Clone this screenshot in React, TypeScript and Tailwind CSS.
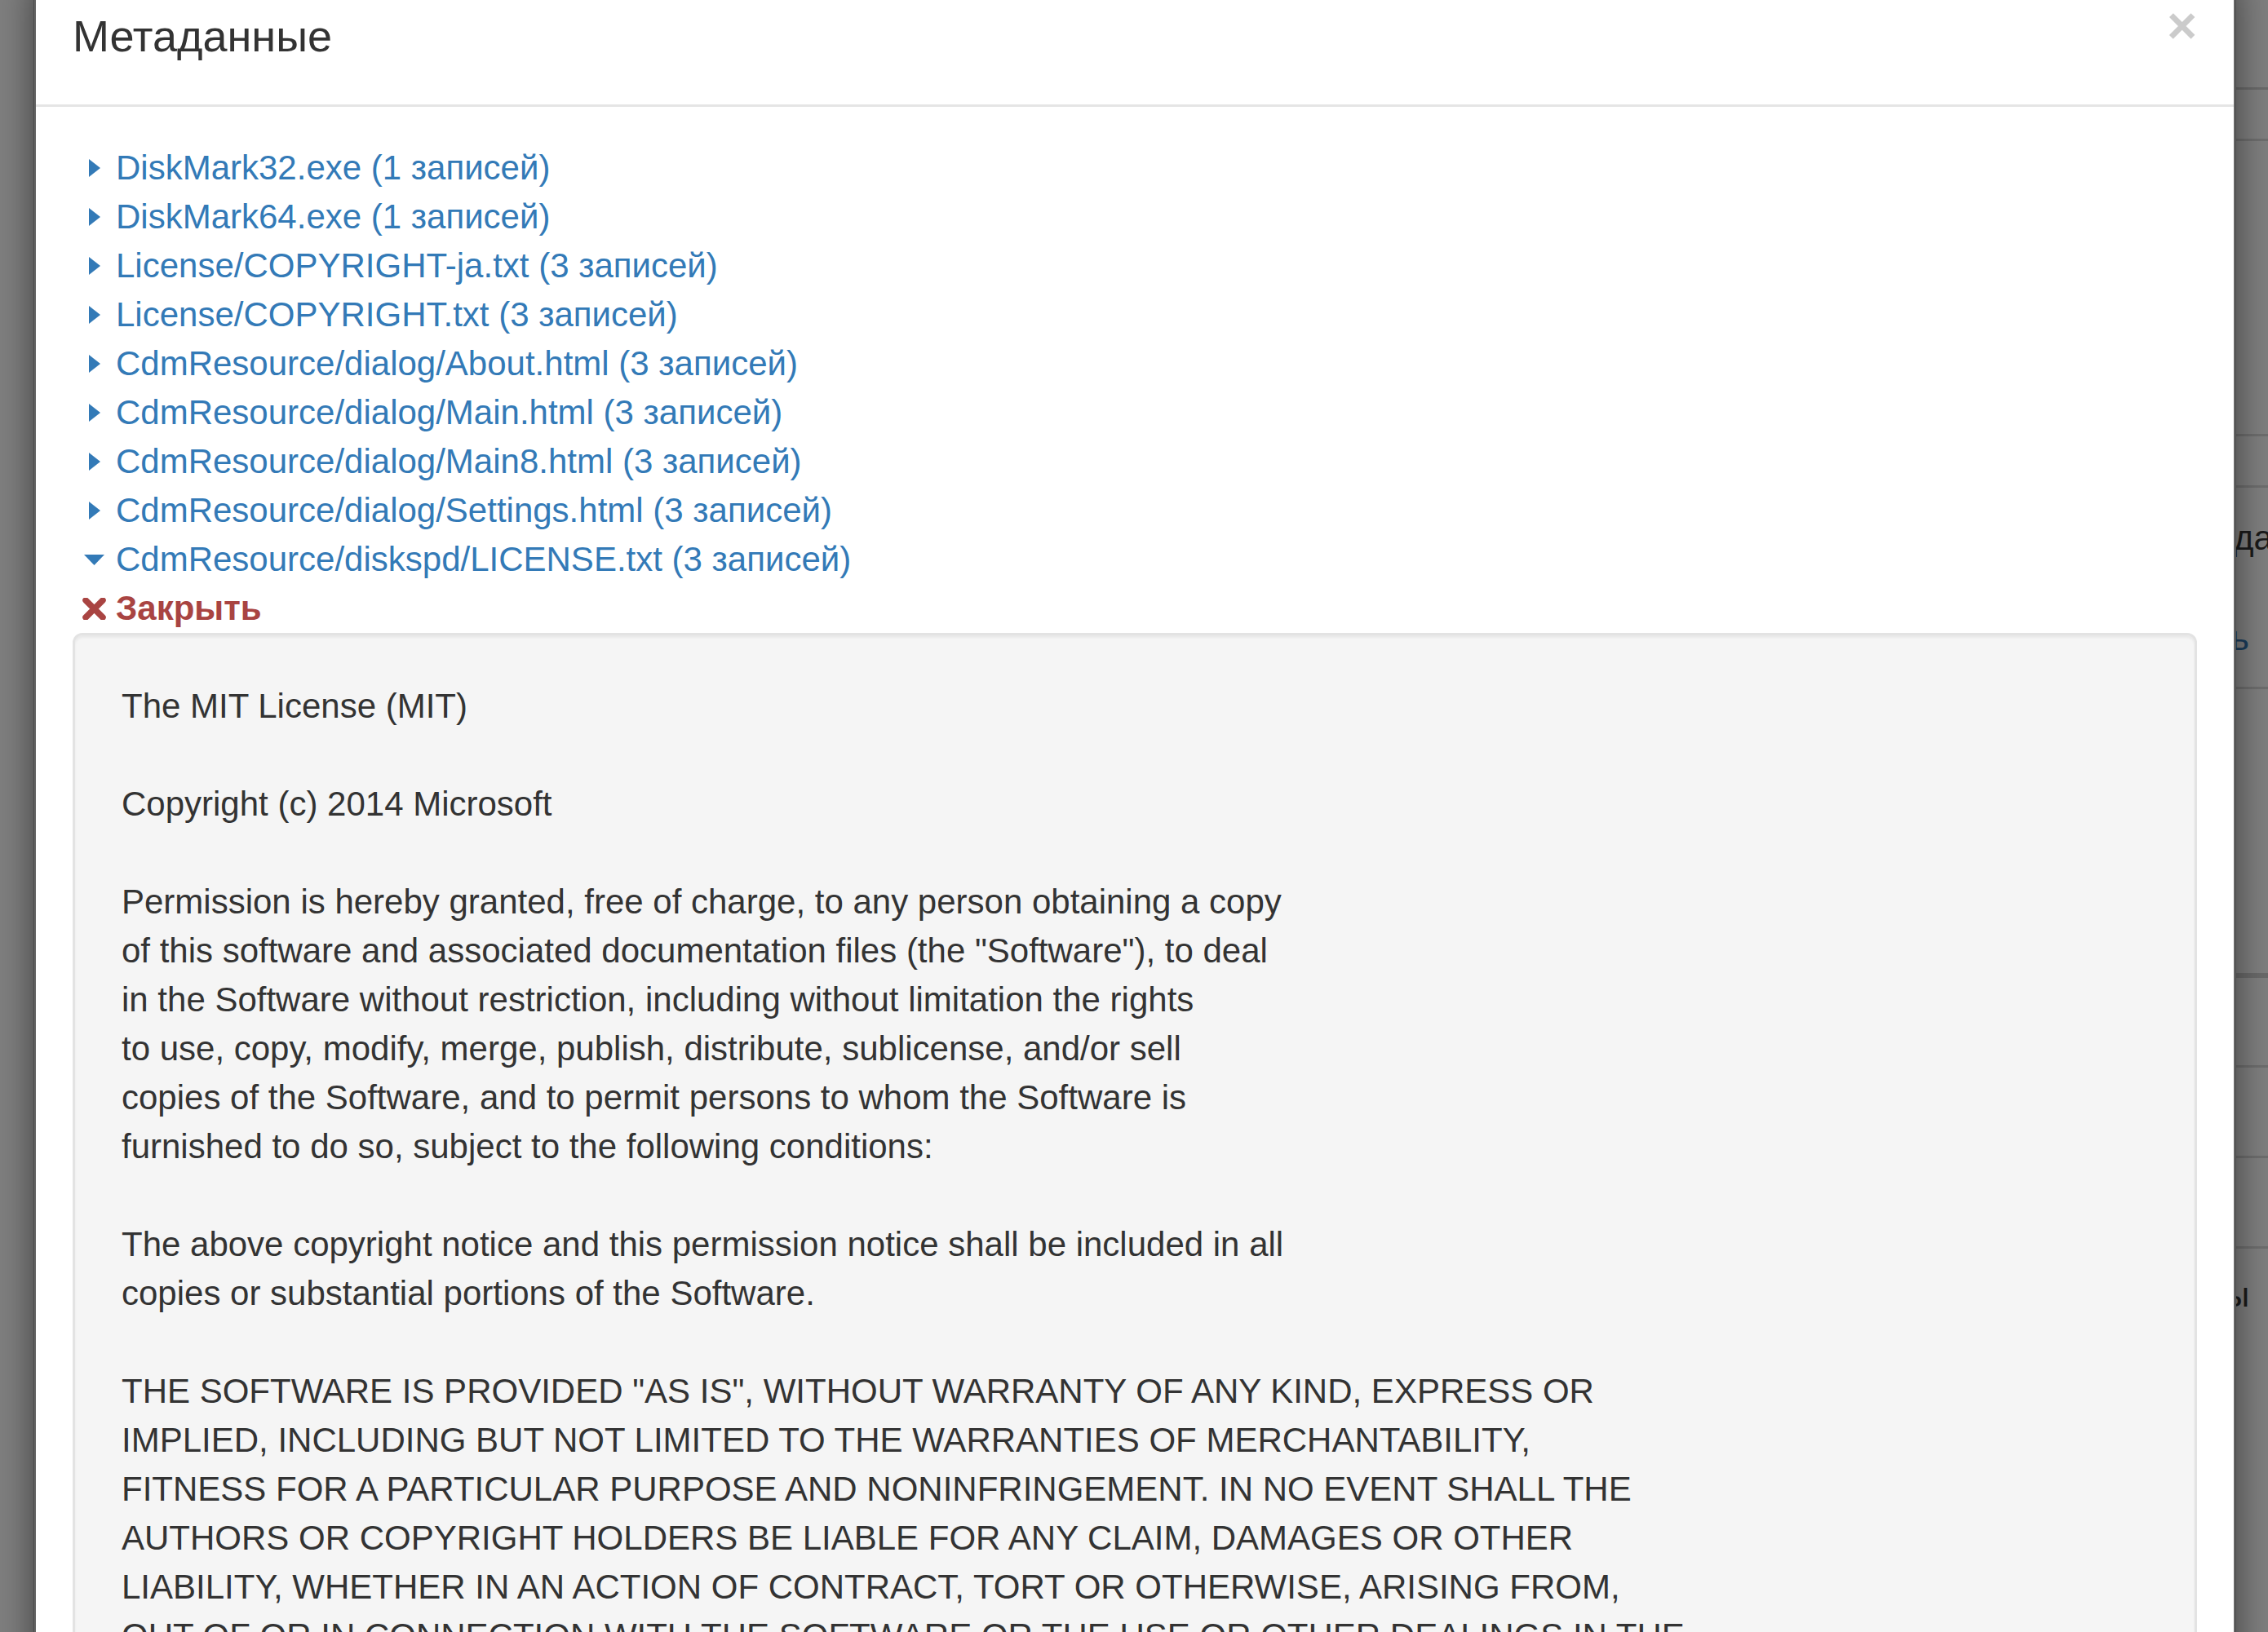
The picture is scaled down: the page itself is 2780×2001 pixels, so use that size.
import React from 'react';

type Entry = { name: string; count: number; open?: boolean };

const entries: Entry[] = [
  { name: 'DiskMark32.exe', count: 1 },
  { name: 'DiskMark64.exe', count: 1 },
  { name: 'License/COPYRIGHT-ja.txt', count: 3 },
  { name: 'License/COPYRIGHT.txt', count: 3 },
  { name: 'CdmResource/dialog/About.html', count: 3 },
  { name: 'CdmResource/dialog/Main.html', count: 3 },
  { name: 'CdmResource/dialog/Main8.html', count: 3 },
  { name: 'CdmResource/dialog/Settings.html', count: 3 },
  { name: 'CdmResource/diskspd/LICENSE.txt', count: 3, open: true },
];

const licenseText = `The MIT License (MIT)

Copyright (c) 2014 Microsoft

Permission is hereby granted, free of charge, to any person obtaining a copy
of this software and associated documentation files (the "Software"), to deal
in the Software without restriction, including without limitation the rights
to use, copy, modify, merge, publish, distribute, sublicense, and/or sell
copies of the Software, and to permit persons to whom the Software is
furnished to do so, subject to the following conditions:

The above copyright notice and this permission notice shall be included in all
copies or substantial portions of the Software.

THE SOFTWARE IS PROVIDED "AS IS", WITHOUT WARRANTY OF ANY KIND, EXPRESS OR
IMPLIED, INCLUDING BUT NOT LIMITED TO THE WARRANTIES OF MERCHANTABILITY,
FITNESS FOR A PARTICULAR PURPOSE AND NONINFRINGEMENT. IN NO EVENT SHALL THE
AUTHORS OR COPYRIGHT HOLDERS BE LIABLE FOR ANY CLAIM, DAMAGES OR OTHER
LIABILITY, WHETHER IN AN ACTION OF CONTRACT, TORT OR OTHERWISE, ARISING FROM,
OUT OF OR IN CONNECTION WITH THE SOFTWARE OR THE USE OR OTHER DEALINGS IN THE
SOFTWARE.`;

const TriangleRight = () => (
  <svg width="14" height="22" viewBox="0 0 14 22">
    <polygon points="0,0 14,11 0,22" fill="#337ab7" />
  </svg>
);

const TriangleDown = () => (
  <svg width="25" height="13" viewBox="0 0 25 13">
    <polygon points="0,0 25,0 12.5,13" fill="#337ab7" />
  </svg>
);

const RemoveIcon = () => (
  <svg width="29" height="27" viewBox="0 0 29 27">
    <path d="M4 3 L25 24 M25 3 L4 24" stroke="#a94442" strokeWidth="7.5" strokeLinecap="round" />
  </svg>
);

const EntryRow: React.FC<{ entry: Entry }> = ({ entry }) => (
  <div className="flex h-[60px] items-center pl-[12px]">
    <span className="flex w-[29px] justify-center">{entry.open ? <TriangleDown /> : <TriangleRight />}</span>
    <a className="ml-[12px] cursor-pointer text-[#337ab7]">
      {entry.name} ({entry.count} записей)
    </a>
  </div>
);

// page behind the backdrop, only a thin slice of it is visible
const PageSlice = () => (
  <div className="flex min-w-0 flex-1 flex-col overflow-hidden bg-[#7f7f7f] text-[42px] leading-[60px]">
    <div className="h-[107px] shrink-0" />
    <div className="h-[63px] shrink-0 border-t-[3px] border-[#6a6a6a]" />
    <div className="h-[362px] shrink-0 border-t-[3px] border-[#6e6e6e]" />
    <div className="h-[63px] shrink-0 border-t-[3px] border-[#6e6e6e]" />
    <div className="flex h-[247px] shrink-0 flex-col border-t-[3px] border-[#6e6e6e] pt-[32px]">
      <span className="-ml-[3px] whitespace-nowrap text-[#1a1a1a]">да</span>
      <span className="-ml-[6px] mt-[63px] whitespace-nowrap text-[#1a3d5c]">ь</span>
    </div>
    <div className="h-[351px] shrink-0 border-t-[3px] border-[#6e6e6e]" />
    <div className="h-[113px] shrink-0 border-t-[6px] border-[#6a6a6a]" />
    <div className="h-[111px] shrink-0 border-t-[3px] border-[#6e6e6e]" />
    <div className="h-[111px] shrink-0 border-t-[3px] border-[#6e6e6e]" />
    <div className="flex-1 border-t-[3px] border-[#6e6e6e] pt-[27px]">
      <span className="-ml-[14px] whitespace-nowrap text-[#1a1a1a]">ы</span>
    </div>
  </div>
);

export default function App() {
  return (
    <div className="flex h-[2001px] w-[2780px] overflow-hidden bg-[#7f7f7f] font-['Liberation_Sans',Arial,sans-serif] text-[#333]">
      <div className="w-[41px] shrink-0" />
      <div className="relative z-10 -mt-[42px] w-[2700px] shrink-0 self-start rounded-[18px] border-[3px] border-black/20 bg-white bg-clip-padding shadow-[0_15px_45px_rgba(0,0,0,0.5)]">
        <div className="flex items-start justify-between border-b-[3px] border-[#e5e5e5] p-[45px]">
          <h4 className="text-[54px] leading-[77px]">Метаданные</h4>
          <button className="-mt-[6px] text-[63px] font-bold leading-none text-black opacity-20">×</button>
        </div>
        <div className="p-[45px] text-[42px] leading-[60px]">
          {entries.map((e) => (
            <EntryRow key={e.name} entry={e} />
          ))}
          <div className="flex h-[60px] items-center pl-[12px]">
            <span className="flex w-[29px] justify-center">
              <RemoveIcon />
            </span>
            <a className="ml-[12px] cursor-pointer font-bold text-[#a94442]">Закрыть</a>
          </div>
          <div className="whitespace-pre-line rounded-[12px] border-[3px] border-[#e3e3e3] bg-[#f5f5f5] p-[57px] shadow-[inset_0_3px_3px_rgba(0,0,0,0.05)]">
            {licenseText}
          </div>
        </div>
      </div>
      <PageSlice />
    </div>
  );
}
